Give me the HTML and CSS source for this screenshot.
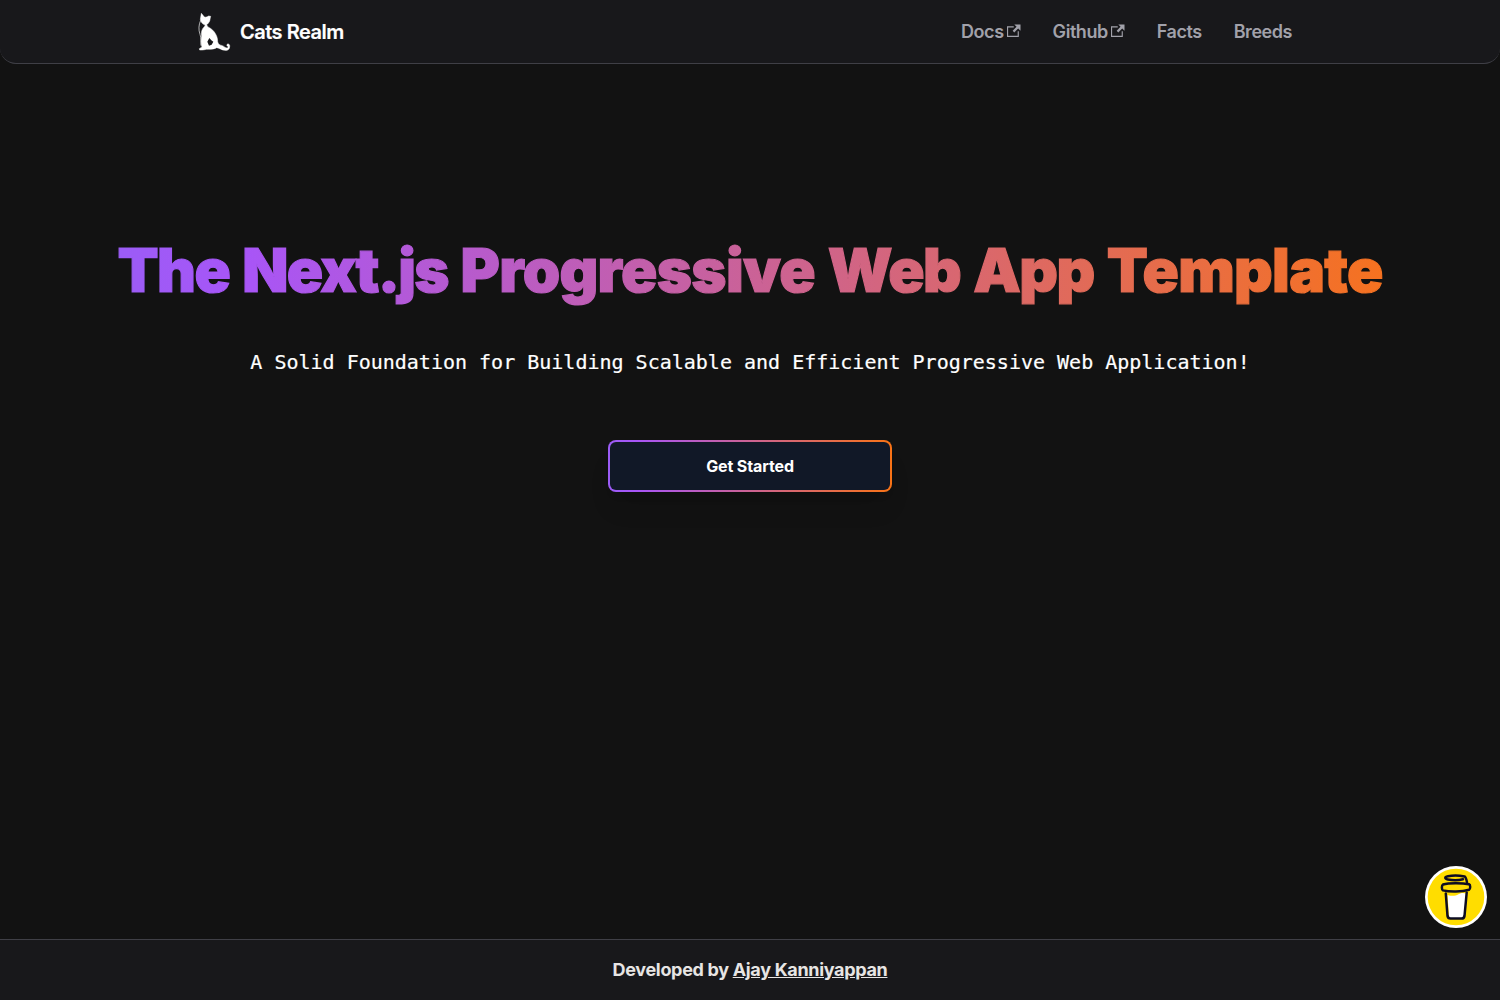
FILE: index.html
```html
<!DOCTYPE html>
<html lang="en">
<head>
<meta charset="utf-8">
<title>Cats Realm</title>
<link rel="stylesheet" href="styles.css">
</head>
<body>
<header class="navbar">
  <div class="navbar-inner">
    <a class="brand">
      <svg class="logo" viewBox="0 0 120 138" fill="#fff" stroke="#fff" stroke-width="1.500">
        <path d="M19 13C22 16 25 21 28 24c4 1 9 0 13-3l6 1c-2 5-1 9-3 14-2 4-5 9-9 11l3 6c6 3 14 8 20 16 7 10 10 19 10 29 1 7 6 10 14 12 6 2 9 7 14 7 3 0 4-2 3-5-4-1-5-5-1-7 4-1 7 3 6 9-1 8-6 11-15 10-10-1-16-7-24-8-5 3-12 5-24 5-8-1-15 3-27 2l-1-4 8-5c-4-11-3-22-1-33-2-11 0-21 8-28l3-5c-8-2-13-7-15-17z"/>
        <path d="M17 34c-6 13-7 28-2 42 4 11 2 22 3 34" fill="none" stroke-width="2"/>
        <path d="m43 87-6 11 5 12 8-3 5-9-6-4z" fill="#18181b" stroke="none"/>
      </svg>
      <span class="brand-name">Cats Realm</span>
    </a>
    <nav class="links">
      <a class="link">Docs<svg class="ext" viewBox="0 0 24 24"><path d="M21 13v10H0V4h12v2H2v15h17v-8h2zm3-12H13.012l4.035 4-6.977 7.070 2.828 2.828 6.977-7.070L24 12V1z" fill="currentColor"/></svg></a>
      <a class="link">Github<svg class="ext" viewBox="0 0 24 24"><path d="M21 13v10H0V4h12v2H2v15h17v-8h2zm3-12H13.012l4.035 4-6.977 7.070 2.828 2.828 6.977-7.070L24 12V1z" fill="currentColor"/></svg></a>
      <a class="link">Facts</a>
      <a class="link">Breeds</a>
    </nav>
  </div>
</header>
<main class="hero">
  <h1 class="title">The <span class="tight">Next.js</span> <span class="loose">Progressive</span> Web App <span class="loose">Template</span></h1>
  <p class="subtitle">A Solid Foundation for Building Scalable and Efficient Progressive Web Application!</p>
  <a class="cta"><span class="cta-label">Get Started</span></a>
</main>
<a class="coffee">
  <svg viewBox="0 0 62 62">
    <circle cx="31" cy="31" r="31" fill="#fff"/>
    <circle cx="31" cy="31" r="28.300" fill="#fd0"/>
    <path d="M22.500 29c5 1.500 8 .8 11-.8s5-1.500 7.500-.8L39 50c-.2 1.500-1 2.300-2.500 2.300h-10c-1.500 0-2.400-.8-2.500-2.300z" fill="#fff"/>
    <g fill="none" stroke="#0d0c22" stroke-width="2.500" stroke-linecap="round" stroke-linejoin="round">
      <path d="M20.800 27.500 22.500 50c.3 1.800 1.200 2.500 3 2.500h11c1.800 0 2.800-.8 3-2.500l2.200-23.500"/>
      <path d="M18 18.500c6-1.700 19-1.700 26-.2 1.700.6 1.500 4.700 0 5.500-7 2.100-19 2.400-26 .6-1.500-.8-1.500-5 0-5.900z"/>
      <path d="M38 13.300c-5 1.300-10 1.200-15 .3-3.700-1-3.500-2.500 0-3.300 5-1.100 11-.9 16.500.1 1.500.7 2 3.200 2.500 5.800"/>
    </g>
  </svg>
</a>
<footer class="footer"><p>Developed by <a class="author">Ajay Kanniyappan</a></p></footer>
</body>
</html>
```
FILE: styles.css
```css
* { box-sizing: border-box; }
body { margin: 0; height: 100vh; display: flex; flex-direction: column; background: #121212; color: #fff; font-family: Inter, sans-serif; }
.navbar { height: 64px; background: #18181b; border-bottom: 1px solid #3f3f46; border-radius: 0 0 16px 16px; }
.navbar-inner { width: 1110px; height: 63px; margin: 0 auto; display: flex; align-items: center; justify-content: space-between; padding-right: 13px; }
.brand { display: flex; align-items: center; gap: 5px; }
.logo { width: 40px; height: 46px; }
.brand-name { font-size: 20px; font-weight: 600; letter-spacing: -0.5px; -webkit-text-stroke: 0.2px #fff; }
.links { display: flex; gap: 32px; }
.link { display: flex; align-items: center; gap: 3.500px; color: #a1a1aa; font-size: 18px; font-weight: 600; letter-spacing: -0.45px; }
.ext { width: 13.500px; height: 13.500px; margin-bottom: 2px; }
.hero { flex: 1; display: flex; flex-direction: column; align-items: center; padding-top: 176px; }
.title { margin: 0; padding-bottom: 8px; font-size: 60px; line-height: 60px; font-weight: 900; letter-spacing: -1.5px; word-spacing: 2.400px; white-space: nowrap; color: transparent; -webkit-text-stroke: 1.200px transparent; background: linear-gradient(90deg, #9b5cf6, #a855f7 10%, #f97316 104%); background-clip: text; -webkit-background-clip: text; }
.tight { letter-spacing: -1.800px; }
.loose { letter-spacing: -0.700px; }
.subtitle { margin: 40px 0 0; font: 20px/28px "DejaVu Sans Mono", monospace; -webkit-text-stroke: 0.2px #fff; }
.cta { width: 284px; height: 52px; margin-top: 64px; padding: 2px; border-radius: 8px; display: flex; background: linear-gradient(90deg, #9b5cf6, #a855f7 10%, #f97316); box-shadow: 0 20px 25px -5px rgb(0 0 0 / .1), 0 8px 10px -6px rgb(0 0 0 / .1); }
.cta-label { flex: 1; display: flex; align-items: center; justify-content: center; border-radius: 6px; background: #111827; font-size: 16px; font-weight: 700; letter-spacing: -0.12px; }
.coffee { position: fixed; right: 13px; bottom: 72px; width: 62px; height: 62px; }
.coffee svg { display: block; }
.footer { height: 61px; display: flex; align-items: center; justify-content: center; padding-bottom: 2px; background: #18181b; border-top: 1px solid #3f3f46; color: #e7e5e4; font-size: 18px; font-weight: 700; letter-spacing: -0.32px; }
.footer p { margin: 0; }
.author { text-decoration: underline; }
```
